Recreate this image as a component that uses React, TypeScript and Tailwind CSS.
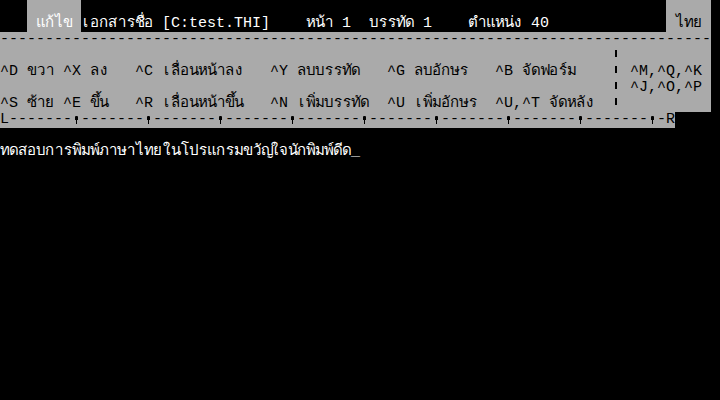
import React from 'react';

// Thai marks that sit above or below a base letter share its cell
const MARK = /[\u0E31\u0E34-\u0E3A\u0E47-\u0E4E]/;

const toCells = (s: string): string[] => {
  const out: string[] = [];
  for (const ch of s) {
    if (MARK.test(ch) && out.length) out[out.length - 1] += ch;
    else out.push(ch);
  }
  return out;
};

const Cell: React.FC<{ c: string }> = ({ c }) => {
  if (c === '¦') {
    return (
      <span className="w-[9px] h-[16px] shrink-0 flex pl-[3px] pt-[2px]">
        <span className="w-[2px] h-[7px] bg-black"></span>
      </span>
    );
  }
  if (c === '!') {
    return (
      <span className="w-[9px] h-[16px] shrink-0 flex flex-col items-center pt-[4px]">
        <span className="w-[3px] h-[4px] bg-black rounded-t-[1px]"></span>
        <span className="w-[1px] h-[4px] bg-black"></span>
      </span>
    );
  }
  return <span className="w-[9px] shrink-0 text-center whitespace-pre">{c}</span>;
};

const Row: React.FC<{ text?: string }> = ({ text = '' }) => (
  <div className="flex h-[16px] leading-[16px]">
    {toCells(text).map((c, i) => (
      <Cell key={i} c={c} />
    ))}
  </div>
);

const ruler = 'L' + '-------!'.repeat(9) + '-R';

export default function App() {
  return (
    <div className="w-[720px] h-[400px] bg-black overflow-hidden text-[15px] font-['Liberation_Mono',monospace] text-white">
      {/* status bar */}
      <div className="flex h-[32px]">
        <div className="w-[27px] shrink-0"></div>
        <div className="w-[54px] shrink-0 bg-[#aaaaaa] flex flex-col">
          <Row />
          <Row text=" แก้ไข" />
        </div>
        <div className="w-[585px] shrink-0 flex flex-col">
          <Row />
          <Row text="เอกสารชื่อ [C:test.THI]    หน้า 1  บรรทัด 1    ตำแหน่ง 40" />
        </div>
        <div className="w-[45px] shrink-0 bg-[#aaaaaa] text-black flex flex-col">
          <Row />
          <Row text=" ไทย" />
        </div>
      </div>

      {/* key help */}
      <div className="w-[711px] bg-[#aaaaaa] text-black">
        <Row text={'-'.repeat(79)} />
        <Row text={' '.repeat(68) + '¦'} />
        <Row text="^D ขวา ^X ลง   ^C เลื่อนหน้าลง   ^Y ลบบรรทัด   ^G ลบอักษร   ^B จัดฟอร์ม    ¦ ^M,^Q,^K" />
        <Row text={' '.repeat(68) + '¦ ^J,^O,^P'} />
        <Row text="^S ซ้าย ^E ขึ้น   ^R เลื่อนหน้าขึ้น   ^N เพิ่มบรรทัด  ^U เพิ่มอักษร  ^U,^T จัดหลัง  ¦" />
      </div>
      <div className="w-[675px] bg-[#aaaaaa] text-black">
        <Row text={ruler} />
      </div>

      {/* document */}
      <Row />
      <Row text="ทดสอบการพิมพ์ภาษาไทยในโปรแกรมขวัญใจนักพิมพ์ดีด_" />
    </div>
  );
}
